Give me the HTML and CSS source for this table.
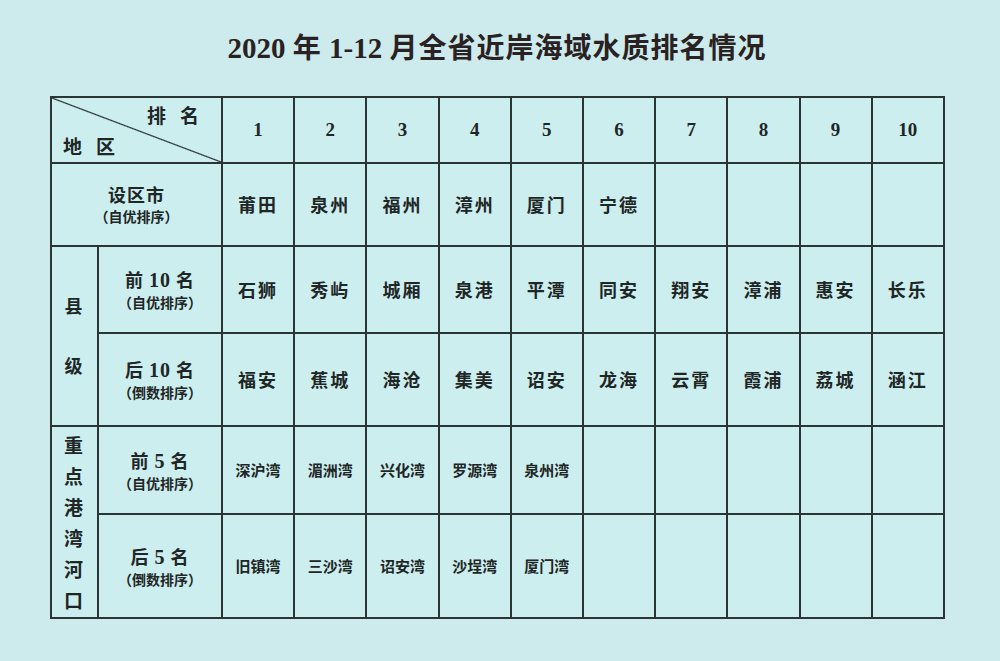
FILE: index.html
```html
<!DOCTYPE html>
<html lang="zh-CN">
<head>
<meta charset="utf-8">
<title>2020年1-12月全省近岸海域水质排名情况</title>
<link rel="stylesheet" href="styles.css">
</head>
<body>
<div class="page">
  <h1 class="title"><span class="num">2020</span> 年 <span class="num">1-12</span> 月全省近岸海域水质排名情况</h1>
  <table class="rank">
    <colgroup>
      <col class="c-a"><col class="c-b">
      <col class="c-n"><col class="c-n"><col class="c-n"><col class="c-n"><col class="c-n">
      <col class="c-n"><col class="c-n"><col class="c-n"><col class="c-n"><col class="c-n">
    </colgroup>
    <tr class="r-head">
      <td colspan="2" class="diag">
        <div class="diag-in">
          <span class="d-top"><span>排</span><span>名</span></span>
          <span class="d-bot"><span>地</span><span>区</span></span>
        </div>
      </td>
      <td class="num">1</td><td class="num">2</td><td class="num">3</td><td class="num">4</td><td class="num">5</td>
      <td class="num">6</td><td class="num">7</td><td class="num">8</td><td class="num">9</td><td class="num">10</td>
    </tr>
    <tr class="r-city">
      <td colspan="2" class="lab"><div class="lab-main">设区市</div><div class="lab-sub">（自优排序）</div></td>
      <td>莆田</td><td>泉州</td><td>福州</td><td>漳州</td><td>厦门</td><td>宁德</td>
      <td></td><td></td><td></td><td></td>
    </tr>
    <tr class="r-c1">
      <td rowspan="2" class="side"><div class="side-x">县</div><div class="side-x side-y">级</div></td>
      <td class="lab"><div class="lab-main">前 <span class="n">10</span> 名</div><div class="lab-sub">（自优排序）</div></td>
      <td>石狮</td><td>秀屿</td><td>城厢</td><td>泉港</td><td>平潭</td><td>同安</td>
      <td>翔安</td><td>漳浦</td><td>惠安</td><td>长乐</td>
    </tr>
    <tr class="r-c2">
      <td class="lab"><div class="lab-main">后 <span class="n">10</span> 名</div><div class="lab-sub">（倒数排序）</div></td>
      <td>福安</td><td>蕉城</td><td>海沧</td><td>集美</td><td>诏安</td><td>龙海</td>
      <td>云霄</td><td>霞浦</td><td>荔城</td><td>涵江</td>
    </tr>
    <tr class="r-b1">
      <td rowspan="2" class="side side-v">重<br>点<br>港<br>湾<br>河<br>口</td>
      <td class="lab"><div class="lab-main">前 <span class="n">5</span> 名</div><div class="lab-sub">（自优排序）</div></td>
      <td class="sm">深沪湾</td><td class="sm">湄洲湾</td><td class="sm">兴化湾</td><td class="sm">罗源湾</td><td class="sm">泉州湾</td>
      <td></td><td></td><td></td><td></td><td></td>
    </tr>
    <tr class="r-b2">
      <td class="lab"><div class="lab-main">后 <span class="n">5</span> 名</div><div class="lab-sub">（倒数排序）</div></td>
      <td class="sm">旧镇湾</td><td class="sm">三沙湾</td><td class="sm">诏安湾</td><td class="sm">沙埕湾</td><td class="sm">厦门湾</td>
      <td></td><td></td><td></td><td></td><td></td>
    </tr>
  </table>
</div>
</body>
</html>
```

FILE: styles.css
```css
html, body {
  margin: 0;
  padding: 0;
  background: #cdebec;
}
body {
  font-family: "Noto Sans CJK SC", "Liberation Sans", sans-serif;
  color: #1e2626;
}
.page {
  width: 1000px;
  height: 661px;
  padding-top: 27px;
  box-sizing: border-box;
}
.title {
  margin: 0;
  height: 69px;
  text-align: center;
  font-size: 28px;
  font-weight: 700;
  line-height: 38px;
  padding-right: 6px;
  color: #2a2222;
  letter-spacing: 1px;
}
.title .num {
  font-family: "Liberation Serif", serif;
  font-weight: 700;
  font-size: 29px;
  letter-spacing: 0;
}
.rank {
  margin-left: 50px;
  border-collapse: collapse;
  table-layout: fixed;
  width: 893px;
  border: 2.5px solid #283232;
}
.c-a { width: 47px; }
.c-b { width: 124px; }
.c-n { width: 72.2px; }
.rank td {
  border: 2px solid #2c3535;
  background: #cdeeef;
  text-align: center;
  vertical-align: middle;
  padding: 0;
  font-size: 18px;
  font-weight: 700;
  letter-spacing: 2px;
  line-height: 1.2;
}
.rank td.num {
  font-family: "Liberation Serif", serif;
  font-size: 19px;
  letter-spacing: 0;
}
.rank td.sm {
  font-size: 15px;
  letter-spacing: 0;
}
.r-head { height: 66px; }
.r-city { height: 83px; }
.r-c1 { height: 87px; }
.r-c2 { height: 93px; }
.r-b1 { height: 88px; }
.r-b2 { height: 104px; }

.diag {
  background: linear-gradient(to top right, #cdeeef calc(50% - 1.2px), #283232 50%, #cdeeef calc(50% + 1.2px)) !important;
}
.diag-in {
  height: 62px;
  display: flex;
  flex-direction: column;
  justify-content: space-between;
  padding: 5px 22px 3px 11px;
  box-sizing: border-box;
  font-size: 19px;
  letter-spacing: 0;
}
.d-top, .d-bot {
  display: flex;
  gap: 14px;
}
.d-top { align-self: flex-end; }
.d-bot { align-self: flex-start; }

.lab-main {
  font-size: 18px;
  letter-spacing: 1px;
}
.lab-main .n {
  font-family: "Liberation Serif", serif;
  font-size: 20px;
}
.lab-sub {
  font-size: 14px;
  letter-spacing: 0;
  margin-top: 2px;
}
.side {
  font-size: 19px;
}
.side-y {
  margin-top: 38px;
}
.rank td.side-v {
  line-height: 31px;
  font-size: 19px;
}
```
